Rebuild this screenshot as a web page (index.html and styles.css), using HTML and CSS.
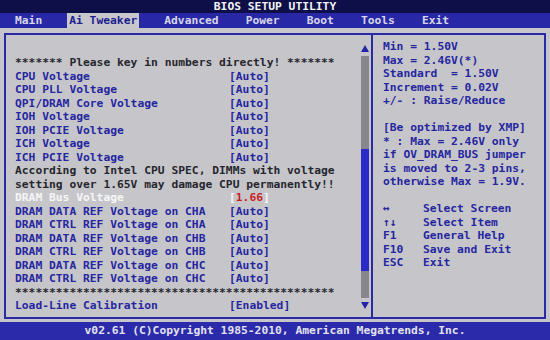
FILE: index.html
```html
<!DOCTYPE html>
<html lang="en">
<head>
    <meta charset="UTF-8">
    <meta name="viewport" content="width=device-width, initial-scale=1.0">
    <title>BIOS Setup Utility</title>
    <link rel="stylesheet" href="styles.css">
</head>
<body>
    <div class="title-bar">BIOS SETUP UTILITY</div>
    <div class="menu-bar">
        <span class="tab">Main</span>
        <span class="tab active">Ai Tweaker</span>
        <span class="tab">Advanced</span>
        <span class="tab">Power</span>
        <span class="tab">Boot</span>
        <span class="tab">Tools</span>
        <span class="tab">Exit</span>
    </div>

    <div class="main">
        <div class="frame">
            <div class="left">
                <div class="items">
                    <div class="note">******* Please key in numbers directly! *******</div>
                    <div class="row"><span>CPU Voltage</span><span>[Auto]</span></div>
                    <div class="row"><span>CPU PLL Voltage</span><span>[Auto]</span></div>
                    <div class="row"><span>QPI/DRAM Core Voltage</span><span>[Auto]</span></div>
                    <div class="row"><span>IOH Voltage</span><span>[Auto]</span></div>
                    <div class="row"><span>IOH PCIE Voltage</span><span>[Auto]</span></div>
                    <div class="row"><span>ICH Voltage</span><span>[Auto]</span></div>
                    <div class="row"><span>ICH PCIE Voltage</span><span>[Auto]</span></div>
                    <div class="note">According to Intel CPU SPEC, DIMMs with voltage</div>
                    <div class="note">setting over 1.65V may damage CPU permanently!!</div>
                    <div class="row selected"><span>DRAM Bus Voltage</span><span>[<em>1.66</em>]</span></div>
                    <div class="row"><span>DRAM DATA REF Voltage on CHA</span><span>[Auto]</span></div>
                    <div class="row"><span>DRAM CTRL REF Voltage on CHA</span><span>[Auto]</span></div>
                    <div class="row"><span>DRAM DATA REF Voltage on CHB</span><span>[Auto]</span></div>
                    <div class="row"><span>DRAM CTRL REF Voltage on CHB</span><span>[Auto]</span></div>
                    <div class="row"><span>DRAM DATA REF Voltage on CHC</span><span>[Auto]</span></div>
                    <div class="row"><span>DRAM CTRL REF Voltage on CHC</span><span>[Auto]</span></div>
                    <div class="note">***********************************************</div>
                    <div class="row"><span>Load-Line Calibration</span><span>[Enabled]</span></div>
                </div>
                <div class="scrollbar">
                    <svg class="arrow" width="8" height="7" viewBox="0 0 8 7"><polygon points="4,0 8,7 0,7" fill="#2424a8"/></svg>
                    <div class="track">
                        <div class="track-top"></div>
                        <div class="thumb"></div>
                        <div class="track-bottom"></div>
                    </div>
                    <svg class="arrow" width="8" height="7" viewBox="0 0 8 7"><polygon points="0,0 8,0 4,7" fill="#2424a8"/></svg>
                </div>
            </div>

            <div class="help">
                <div class="line">Min = 1.50V</div>
                <div class="line">Max = 2.46V(*)</div>
                <div class="line">Standard  = 1.50V</div>
                <div class="line">Increment = 0.02V</div>
                <div class="line">+/- : Raise/Reduce</div>
                <div class="line"> </div>
                <div class="line">[Be optimized by XMP]</div>
                <div class="line">* : Max = 2.46V only</div>
                <div class="line">if OV_DRAM_BUS jumper</div>
                <div class="line">is moved to 2-3 pins,</div>
                <div class="line">otherwise Max = 1.9V.</div>
                <div class="line"> </div>
                <div class="key"><span>&harr;</span><span>Select Screen</span></div>
                <div class="key"><span>&uarr;&darr;</span><span>Select Item</span></div>
                <div class="key"><span>F1</span><span>General Help</span></div>
                <div class="key"><span>F10</span><span>Save and Exit</span></div>
                <div class="key"><span>ESC</span><span>Exit</span></div>
            </div>
        </div>
    </div>

    <div class="footer">v02.61 (C)Copyright 1985-2010, American Megatrends, Inc.</div>
</body>
</html>
```

FILE: styles.css
```css
body {
    margin: 0;
    width: 550px;
    height: 340px;
    overflow: hidden;
    background-color: #c6c6ca;
    font-family: "DejaVu Sans Mono", "Liberation Mono", monospace;
    font-size: 11.3px;
    font-weight: bold;
    color: #2626a0;
}
.title-bar {
    height: 13px;
    line-height: 13px;
    background-color: #0e0e48;
    color: #f4f4f4;
    text-align: center;
}
.menu-bar {
    height: 15px;
    display: flex;
    align-items: center;
    gap: 23px;
    padding-left: 13px;
    background-color: #2828a6;
}
.tab {
    padding: 0 2px;
    line-height: 15px;
    color: #d6d6ea;
}
.tab.active {
    background-color: #c8c8cc;
    color: #1e1e90;
}
.main {
    height: 294px;
    padding: 5px 4px 3px;
    box-sizing: border-box;
}
.frame {
    display: flex;
    height: 100%;
    border: 2px solid #2a2aa6;
    box-sizing: border-box;
}
.left {
    display: flex;
    width: 365px;
    border-right: 2px solid #2a2aa6;
}
.items {
    flex: 1;
    padding: 21px 0 0 9px;
}
.row, .note {
    display: flex;
    height: 13.5px;
    line-height: 13.5px;
    white-space: pre;
}
.row span:first-child {
    width: 214px;
}
.note {
    color: #26262e;
}
.selected {
    color: #f6f6f6;
}
.selected em {
    font-style: normal;
    color: #c81e1e;
}
.scrollbar {
    width: 8px;
    margin-right: 2px;
    padding: 10px 0 8px;
    display: flex;
    flex-direction: column;
    align-items: center;
    gap: 4px;
}
.arrow {
    display: block;
}
.track {
    flex: 1;
    width: 8px;
    display: flex;
    flex-direction: column;
}
.track-top {
    height: 93px;
    background-color: #86868c;
}
.thumb {
    height: 122px;
    background-color: #2a2ac8;
}
.track-bottom {
    flex: 1;
    background-color: #86868c;
}
.help {
    flex: 1;
    padding: 5px 0 0 10px;
}
.line, .key {
    height: 13.5px;
    line-height: 13.5px;
    white-space: pre;
}
.key {
    display: flex;
}
.key span:first-child {
    width: 40px;
}
.footer {
    height: 18px;
    line-height: 18px;
    background-color: #2a2aaa;
    color: #e2e2ee;
    text-align: center;
}
```
